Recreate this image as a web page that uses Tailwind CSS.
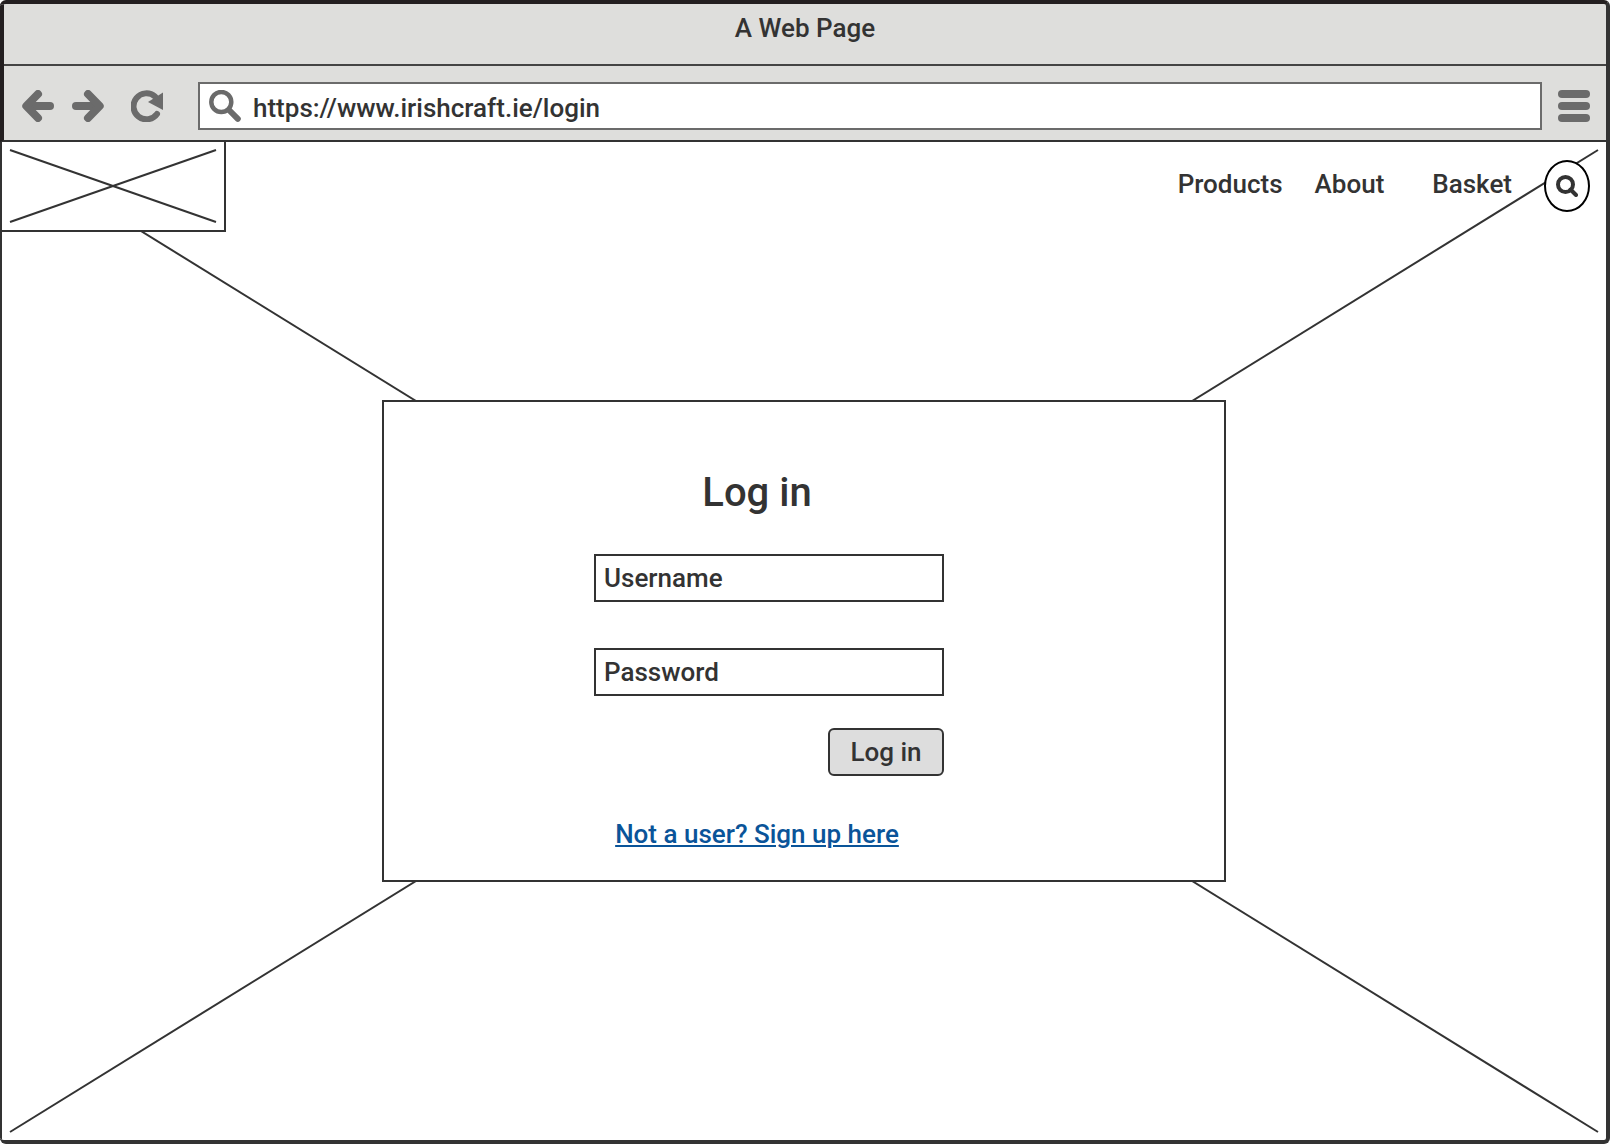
<!DOCTYPE html>
<html lang="en">
<head>
<meta charset="utf-8">
<meta name="viewport" content="width=device-width, initial-scale=1">
<title>A Web Page</title>
<script src="https://cdn.jsdelivr.net/npm/@tailwindcss/browser@4"></script>
</head>
<body class="flex min-h-screen flex-col bg-white font-['Roboto',sans-serif] text-[26px] leading-8 font-medium text-[#333]">
  <div class="flex grow flex-col overflow-hidden rounded-md border-t-4 border-r-4 border-b-4 border-t-[#231f20] border-r-[#333] border-b-[#333] bg-[#333]">
    <!-- Browser chrome -->
    <header class="border-b-2 border-l-4 border-b-[#333] border-l-[#231f20] bg-[#dededc]">
      <div class="flex h-[62px] justify-center border-b-2 border-[#444] pt-2">
        <p>A Web Page</p>
      </div>
      <div class="flex items-center pt-4 pr-4 pb-[10px] pl-[18px] text-[#6b6b6b]">
        <button type="button" aria-label="Back" class="mr-[18px]">
          <svg class="block size-8" viewBox="0 0 32 32" fill="none" stroke="currentColor" stroke-width="8" stroke-linecap="round" stroke-linejoin="round"><path d="M28 16H8"/><path d="M16 4 4.300 16 16 28"/></svg>
        </button>
        <button type="button" aria-label="Forward" class="mr-[27px]">
          <svg class="block size-8" viewBox="0 0 32 32" fill="none" stroke="currentColor" stroke-width="8" stroke-linecap="round" stroke-linejoin="round"><path d="M4 16H24"/><path d="M16 4 27.700 16 16 28"/></svg>
        </button>
        <button type="button" aria-label="Reload" class="mr-[35px]">
          <svg class="block size-8" viewBox="0 0 32 32" fill="none"><path d="M26 24A13 13 0 1 1 24 6.500" stroke="currentColor" stroke-width="6" stroke-linecap="round"/><path d="M32 2.500V20L17 12Z" fill="currentColor"/></svg>
        </button>
        <label class="flex h-12 grow items-center gap-3 border-2 border-[#6b6b6b] bg-white pl-[9px]">
          <svg class="size-8 shrink-0" viewBox="0 0 32 32" fill="none" stroke="currentColor" aria-hidden="true"><circle cx="12.300" cy="12" r="10" stroke-width="4.500"/><path d="M20 20l8.800 8.800" stroke-width="6" stroke-linecap="round"/></svg>
          <input type="text" aria-label="Address" value="https://www.irishcraft.ie/login" class="h-full min-w-0 grow pt-1 text-[#333] outline-none">
        </label>
        <button type="button" aria-label="Menu" class="ml-4 flex w-8 flex-col gap-1">
          <span class="h-2 w-full rounded-full bg-[#6b6b6b]"></span>
          <span class="h-2 w-full rounded-full bg-[#6b6b6b]"></span>
          <span class="h-2 w-full rounded-full bg-[#6b6b6b]"></span>
        </button>
      </div>
    </header>

    <div class="grid grow border-l-2 border-[#333] bg-white">
      <!-- Hero image placeholder -->
      <div class="col-start-1 row-start-1 grid p-2">
        <svg class="size-full overflow-visible" stroke="#333" stroke-width="2" aria-hidden="true"><line x1="0" y1="0" x2="100%" y2="100%"/><line x1="100%" y1="0" x2="0" y2="100%"/></svg>
      </div>

      <!-- Site header -->
      <div class="z-10 col-start-1 row-start-1 flex items-start justify-between self-start">
        <a href="#" aria-label="Home" class="h-[90px] w-[224px] border-r-2 border-b-2 border-[#333] bg-white p-2">
          <svg class="block size-full overflow-visible" stroke="#333" stroke-width="2" aria-hidden="true"><line x1="0" y1="0" x2="100%" y2="100%"/><line x1="100%" y1="0" x2="0" y2="100%"/></svg>
        </a>
        <nav class="flex items-center pt-[18px] pr-4">
          <a href="#" class="mr-8 pb-1">Products</a>
          <a href="#" class="mr-12 pb-1">About</a>
          <a href="#" class="mr-8 pb-1">Basket</a>
          <button type="button" aria-label="Search" class="flex h-[52px] w-[46px] items-center justify-center rounded-[50%] border-2 border-black bg-white">
            <svg class="size-[22px]" viewBox="0 0 22 22" fill="none" stroke="#333" stroke-width="4" aria-hidden="true"><circle cx="9.500" cy="9.500" r="7.500"/><path d="M14.500 14.500 20 20" stroke-linecap="round"/></svg>
          </button>
        </nav>
      </div>

      <!-- Login card -->
      <main class="z-10 col-start-1 row-start-1 flex min-h-[482px] w-full max-w-[844px] flex-col self-center justify-self-center border-2 border-[#333] bg-white pt-[67px] pr-[280px] pb-7 pl-[210px]">
        <h1 class="pr-6 text-center text-[40px] leading-[48px]">Log in</h1>
        <form class="mt-[37px] flex flex-col">
          <input type="text" aria-label="Username" placeholder="Username" class="h-12 border-2 border-[#333] bg-white px-2 outline-none placeholder:text-[#333]">
          <input type="password" aria-label="Password" placeholder="Password" class="mt-[46px] h-12 border-2 border-[#333] bg-white px-2 outline-none placeholder:text-[#333]">
          <button type="submit" class="mt-8 h-12 w-[116px] self-end rounded-md border-2 border-[#333] bg-[#ddd]">Log in</button>
        </form>
        <p class="mt-[42px] pr-6 text-center whitespace-nowrap"><a href="#" class="text-[#0a5499] underline decoration-2 underline-offset-2">Not a user? Sign up here</a></p>
      </main>
    </div>
  </div>
</body>
</html>
